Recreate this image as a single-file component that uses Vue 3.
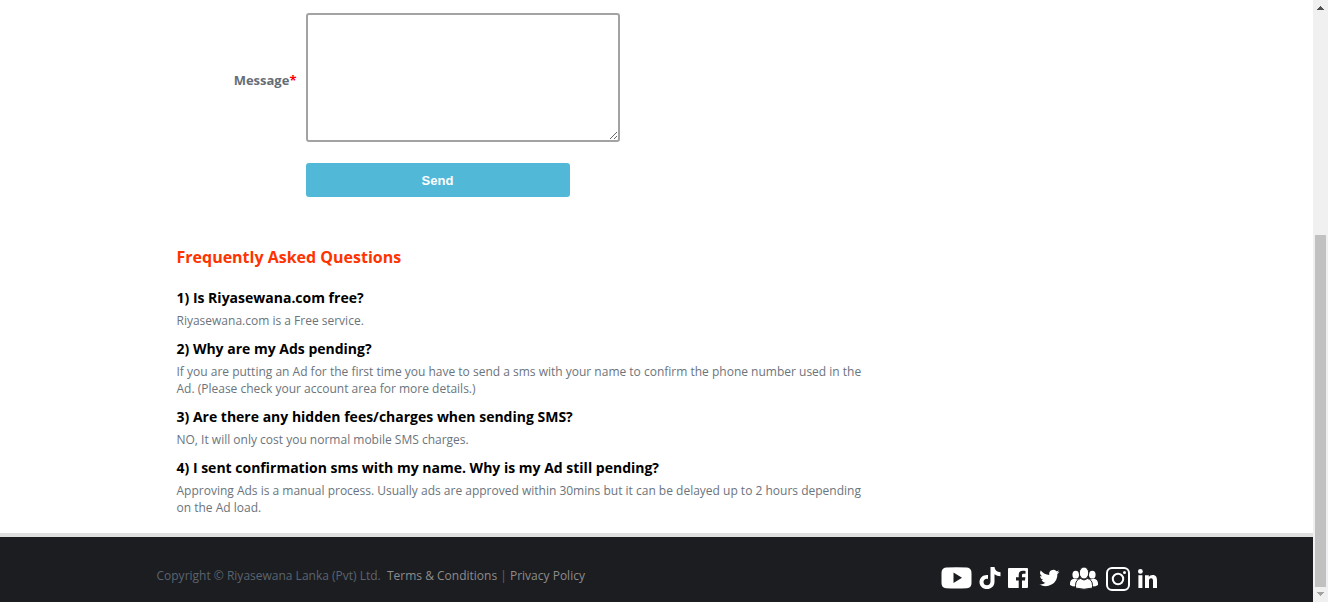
<script setup>
import { ref } from 'vue'

const message = ref('')

const faqs = [
  { q: '1) Is Riyasewana.com free?', a: 'Riyasewana.com is a Free service.' },
  {
    q: '2) Why are my Ads pending?',
    a: 'If you are putting an Ad for the first time you have to send a sms with your name to confirm the phone number used in the Ad. (Please check your account area for more details.)',
  },
  {
    q: '3) Are there any hidden fees/charges when sending SMS?',
    a: 'NO, It will only cost you normal mobile SMS charges.',
  },
  {
    q: '4) I sent confirmation sms with my name. Why is my Ad still pending?',
    a: 'Approving Ads is a manual process. Usually ads are approved within 30mins but it can be delayed up to 2 hours depending on the Ad load.',
  },
]
</script>

<template>
  <div class="shell">
    <div class="page">
      <main class="container content">
        <form class="form" @submit.prevent>
          <label class="label" for="message">Message<span class="required">*</span></label>
          <textarea id="message" v-model="message" class="message"></textarea>
          <button class="send" type="submit">Send</button>
        </form>

        <section class="faq">
          <h2 class="faq-title">Frequently Asked Questions</h2>
          <template v-for="item in faqs" :key="item.q">
            <h3 class="question">{{ item.q }}</h3>
            <p class="answer">{{ item.a }}</p>
          </template>
        </section>
      </main>

      <footer class="footer">
        <div class="container footer-row">
          <p class="legal">
            Copyright © Riyasewana Lanka (Pvt) Ltd.&nbsp;
            <a href="#terms">Terms &amp; Conditions</a> | <a href="#privacy">Privacy Policy</a>
          </p>
          <nav class="social" aria-label="Social media">
            <a href="#youtube" aria-label="YouTube">
              <svg width="31" height="22" viewBox="0 0 31 22">
                <path fill="#fff" fill-rule="evenodd" d="M5 .5Q15.500 0 26 .5Q30.500 1 30.500 6V16Q30.500 21 26 21.300Q15.500 21.800 5 21.300Q.5 21 .5 16V6Q.5 1 5 .5ZM12.500 5.500V16L21 10.700Z" />
              </svg>
            </a>
            <a href="#tiktok" aria-label="TikTok">
              <svg width="20" height="22" viewBox="1 0 20 22">
                <path fill="#fff" d="M11.500 0H15.500C15.700 3 17.800 5 21.500 5.200V9.200C19.200 9.200 17.200 8.500 15.500 7.300V14.700C15.500 19 12.200 22 8 22C3.700 22 .5 18.800.5 14.900C.5 10.400 4.500 7.400 9 8V12C6.500 11.300 4.500 12.900 4.500 14.900C4.500 16.900 6 18.200 7.900 18.200C10 18.200 11.500 16.800 11.500 14.400Z" />
              </svg>
            </a>
            <a href="#facebook" aria-label="Facebook">
              <svg width="20" height="20" viewBox="0 0 20 20">
                <path fill="#fff" d="M1 0H19Q20 0 20 1V19Q20 20 19 20H14V12.500H17L17.400 9.300H14V7.300C14 6.300 14.300 5.800 15.600 5.800H17.500V3C17.100 2.900 16 2.800 14.800 2.800C12.200 2.800 10.700 4.300 10.700 6.900V9.300H8V12.500H10.700V20H1Q0 20 0 19V1Q0 0 1 0Z" />
              </svg>
            </a>
            <a href="#twitter" aria-label="Twitter">
              <svg width="26" height="18" viewBox="-4 1.500 31 21">
                <path fill="#fff" d="M24 4.600c-.9.4-1.800.7-2.800.8 1-.6 1.800-1.600 2.200-2.700-1 .6-2 1-3.100 1.200A4.900 4.900 0 0 0 11.900 8.400 14 14 0 0 1 1.700 3.200a4.900 4.900 0 0 0 1.500 6.600c-.8 0-1.600-.2-2.200-.6v.1a4.900 4.900 0 0 0 3.900 4.800c-.7.2-1.500.2-2.200.1a4.900 4.900 0 0 0 4.600 3.400A9.900 9.900 0 0 1 0 19.500 14 14 0 0 0 21.500 7.100c1-.7 1.800-1.500 2.500-2.500z" />
              </svg>
            </a>
            <a href="#community" aria-label="Community">
              <svg width="28" height="22" viewBox="0 0 28 22">
                <g fill="#fff">
                  <ellipse cx="5.700" cy="7.700" rx="3.300" ry="3.900" />
                  <ellipse cx="22.300" cy="7.700" rx="3.300" ry="3.900" />
                  <path d="M0 18V16.500C0 14 1.500 12 4 11.700L8 12.500H20L24 11.700C26.500 12 28 14 28 16.500V18Q26 19.500 22 19.500H6Q2 19.500 0 18Z" />
                </g>
                <g fill="#fff" stroke="#1c1d21" stroke-width="1">
                  <path d="M5.500 21V18.500C5.500 14.500 7.500 12 10.500 11.500L14 13L17.500 11.500C20.500 12 22.500 14.500 22.500 18.500V21Q14 23.500 5.500 21Z" />
                  <ellipse cx="14" cy="6" rx="4.700" ry="6" />
                </g>
              </svg>
            </a>
            <a href="#instagram" aria-label="Instagram">
              <svg width="24" height="26" viewBox="0 -2 24 26" fill="none" stroke="#fff">
                <rect x="1" y="1" width="22" height="22" rx="5" stroke-width="2" />
                <circle cx="12" cy="12" r="5.200" stroke-width="2" />
                <circle cx="18.500" cy="5.500" r="1.500" fill="#fff" stroke="none" />
              </svg>
            </a>
            <a href="#linkedin" aria-label="LinkedIn">
              <svg width="19" height="20" viewBox="0 -1 19 20">
                <g fill="#fff">
                  <circle cx="2.400" cy="2.400" r="2.400" />
                  <rect x=".4" y="6.200" width="4" height="12.800" />
                  <path d="M7 6.200H10.800V8C11.400 6.800 12.900 5.900 14.700 5.900C18.100 5.900 19 8.200 19 11.500V19H15V12.300C15 10.700 14.800 9.300 13.100 9.300C11.400 9.300 11 10.600 11 12.300V19H7Z" />
                </g>
              </svg>
            </a>
          </nav>
        </div>
      </footer>
    </div>

    <div class="scrollbar" aria-hidden="true">
      <svg class="arrow" viewBox="0 0 15 15" shape-rendering="crispEdges">
        <path fill="#505050" d="M7 6h1v1h1v1h1v1h1v1H4V9h1V8h1V7h1z" />
      </svg>
      <div class="track"></div>
      <div class="thumb"></div>
      <svg class="arrow" viewBox="0 0 15 15" shape-rendering="crispEdges">
        <path fill="#a3a3a3" d="M4 5h7v1h-1v1H9v1H8v1H7V8H6V7H5V6H4z" />
      </svg>
    </div>
  </div>
</template>

<style>
body {
  margin: 0;
  background: #fff;
}
</style>

<style scoped>
.shell {
  display: grid;
  grid-template-columns: minmax(0, 1fr) 15px;
  min-height: 100vh;
  font-family: "Open Sans", "Noto Sans", sans-serif;
  font-size: 12px;
  line-height: 17px;
  color: #6b747c;
}

.page {
  display: flex;
  flex-direction: column;
}

.container {
  box-sizing: border-box;
  width: 100%;
  max-width: 1000px;
  margin: 0 auto;
}

.content {
  padding: 13px 20px 17px;
}

.form {
  display: grid;
  grid-template-columns: 120px 314px;
  column-gap: 9px;
  row-gap: 21px;
  align-items: center;
}

.label {
  padding-top: 4px;
  text-align: right;
  font-size: 13px;
  font-weight: 700;
  line-height: 18px;
  color: #666e76;
}

.required {
  color: #f00;
}

.message {
  box-sizing: border-box;
  width: 100%;
  height: 129px;
  margin: 0;
  padding: 4px;
  border: 2px solid #a3a3a3;
  border-radius: 3px;
  background: #fff;
  outline: none;
  resize: both;
}

.send {
  grid-column: 2;
  width: 264px;
  height: 34px;
  padding: 0;
  border: 0;
  border-radius: 3px;
  background: #51b8d7;
  color: #fff;
  font: 700 13px "Liberation Sans", Arial, sans-serif;
  cursor: pointer;
}

.faq {
  max-width: 700px;
  margin-top: 48px;
}

.faq-title {
  margin: 0 0 17px;
  font-size: 16px;
  line-height: 24px;
  color: #ff3300;
}

.question {
  margin: 0 0 2px;
  font-size: 14px;
  line-height: 24px;
  color: #000;
}

.answer {
  margin: 0 0 8px;
}

.answer:last-child {
  margin-bottom: 0;
}

.footer {
  flex: 1;
  border-top: 4px solid #dfdfdf;
  background: #1c1d21;
}

.footer-row {
  display: flex;
  justify-content: space-between;
  padding-top: 29px;
}

.legal {
  margin: 0;
  padding-top: 1px;
  color: #5b646e;
}

.legal a {
  color: #8c8c8c;
  text-decoration: none;
}

.social {
  display: flex;
  align-items: center;
  gap: 8px;
  height: 24px;
}

.social a,
.social svg {
  display: block;
  overflow: visible;
}

.scrollbar {
  display: flex;
  flex-direction: column;
  background: #f0f0f0;
}

.arrow {
  flex: none;
  width: 15px;
  height: 15px;
}

.track {
  flex: 220 0 0;
}

.thumb {
  flex: 352 0 0;
  margin: 0 2px;
  background: #c1c1c1;
}
</style>
